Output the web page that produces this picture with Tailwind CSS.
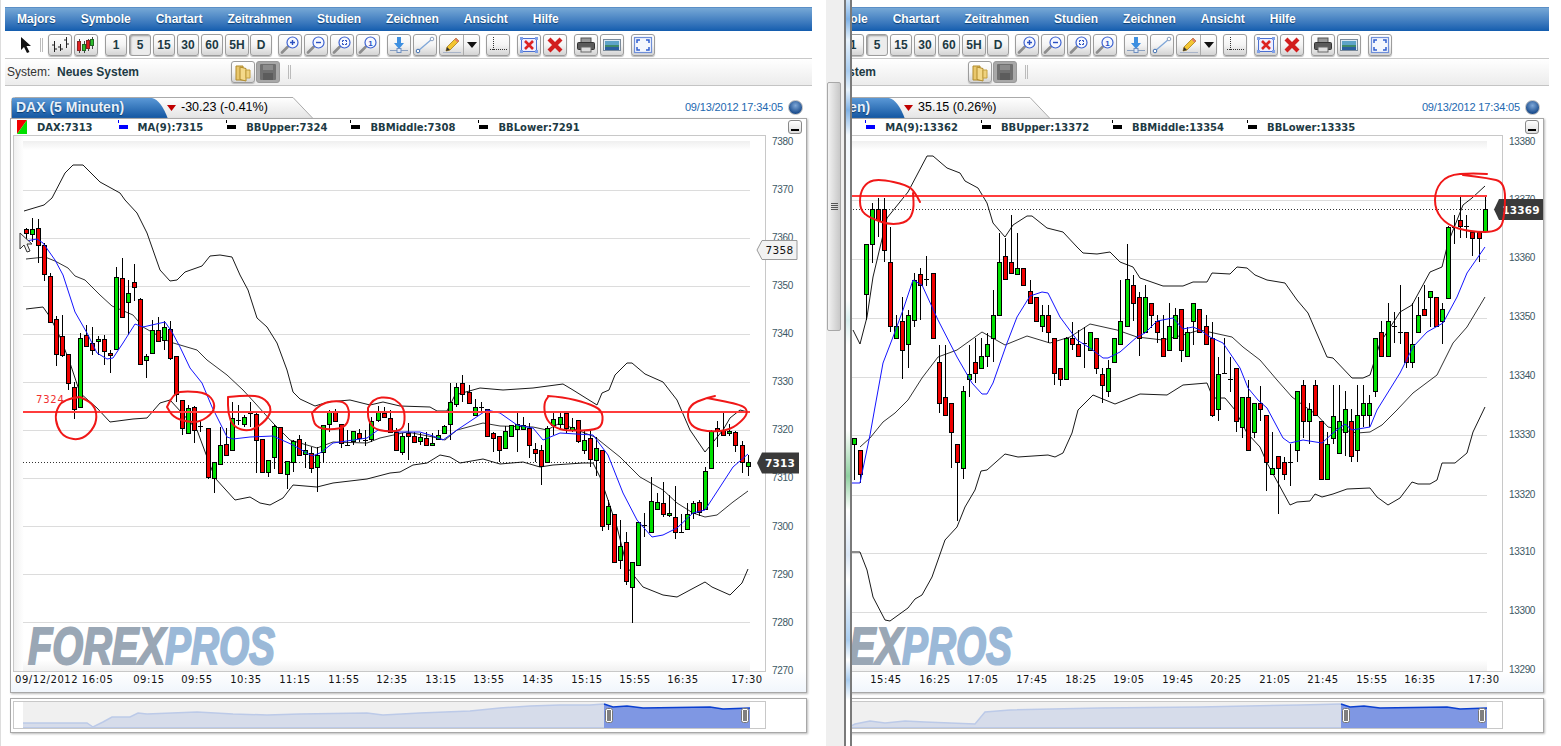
<!DOCTYPE html>
<html lang="en">
<head>
    <meta charset="UTF-8">
    <title>Chart</title>
    <script src="https://cdn.jsdelivr.net/npm/@tailwindcss/browser@4"></script>
</head>
<body class="bg-white h-[746px] w-[1561px] overflow-hidden flex font-['Liberation_Sans',sans-serif] text-[#123]">
    <!-- left chart -->
    <div id="left" class="w-[826px] shrink-0 shadow-[inset_1px_0_0_#ddd]"></div>

    <!-- scrollbar -->
    <div class="w-[18px] shrink-0 bg-[#efefef]">
        <div class="mt-[82px] ml-px h-[249px] w-[14px] rounded-[2px] border border-[#a8a8a8] bg-gradient-to-r from-[#f2f2f2] to-[#c8c8c8] flex flex-col items-center justify-center gap-px">
            <div class="w-[7px] h-px bg-[#555]"></div>
            <div class="w-[7px] h-px bg-[#555]"></div>
            <div class="w-[7px] h-px bg-[#555]"></div>
            <div class="w-[7px] h-px bg-[#555]"></div>
        </div>
    </div>

    <!-- splitter -->
    <div class="w-[8px] shrink-0 border-x-[2px] border-[#7a7a7a] bg-[linear-gradient(to_bottom,#cfe4f8_0,#7fb2e6_19px,#e8f3fc_40px,#a9cdf0_71px,#e8f3fc_90px,#7fb2e6_110px,#f2f8fd_135px,#ffffff_300px,#d9f0f0_320px,#ffffff_345px,#ffffff_430px,#8fd0a0_476px,#ffffff_510px,#d9e6f5_555px,#ffffff_580px,#a9cdf0_640px,#fff_660px,#a9cdf0_680px,#fff_700px)]"></div>

    <!-- right chart, same page scrolled sideways -->
    <div class="flex-1 overflow-hidden">
        <div id="right" class="w-[826px] -ml-[115px]"></div>
    </div>

    <script>
        const F = 'Liberation Sans, Arial, sans-serif';
        const D = 'DejaVu Sans, sans-serif';

        const icons = {
            arrow: '<svg width="13" height="17" viewBox="0 0 13 17"><path d="M1 1v13l3-3 3 6 2.500-1-3-6H11z" fill="#111"/></svg>',
            bars: '<svg width="20" height="17" viewBox="0 0 20 17" fill="none" stroke="#222"><path d="M4.500 5v11M2 9h2.500M4.500 13H7M10.500 8v7M8 11h2.500M10.500 13H13M16.500 1v11M14 4h2.500M16.500 8H19"/></svg>',
            candles: '<svg width="20" height="18" viewBox="0 0 20 18"><path d="M3.500 3v14M8.500 5v12M12.500 3v12M16.500 1v12" stroke="#444"/><rect x="1.500" y="5.500" width="3" height="9" fill="#e02020" stroke="#822"/><rect x="6.500" y="8.500" width="3" height="6" fill="#2fbf2f" stroke="#262"/><rect x="10.500" y="4.500" width="3" height="8" fill="#e02020" stroke="#822"/><rect x="14.500" y="3.500" width="3" height="6" fill="#2fbf2f" stroke="#262"/></svg>',
            zoomIn: mag('<path d="M10 6.500h5M12.500 4v5" stroke="#2a4fc0" stroke-width="1.400"/>'),
            zoomOut: mag('<path d="M10 6.500h5" stroke="#2a4fc0" stroke-width="1.400"/>'),
            zoomFit: mag('<path d="M10.500 6V4.500H12M13 4.500h1.500V6M14.500 7v1.500H13M12 8.500h-1.500V7" stroke="#2a4fc0" fill="none"/>'),
            zoomOne: mag('<text x="12.500" y="9.500" font-size="8" font-weight="bold" fill="#2a4fc0" text-anchor="middle" font-family="Liberation Sans">1</text>'),
            down: '<svg width="20" height="18" viewBox="0 0 20 18"><path d="M8 1h4v6h3l-5 6-5-6h3z" fill="#3d8fe0"/><path d="M1 14.500h18" stroke="#8aa0c0"/><rect x="8" y="12.500" width="4" height="4" fill="#dfe8f5" stroke="#6f8fc0"/></svg>',
            line: '<svg width="20" height="18" viewBox="0 0 20 18"><path d="M3 15L17 3" stroke="#7ea6d8" stroke-width="1.300"/><circle cx="3" cy="15" r="1.800" fill="#fff" stroke="#3f6fb0"/><circle cx="17" cy="3" r="1.800" fill="#fff" stroke="#8aa0c0"/></svg>',
            pencil: '<svg width="20" height="18" viewBox="0 0 20 18"><path d="M5 11L14 2l3 3-9 9-4 1z" fill="#f3c531" stroke="#a8801a" stroke-width=".8"/><path d="M14 2l3 3-1.500 1.500-3-3z" fill="#e07a6a"/><path d="M4 15l1-4 3 3z" fill="#333"/><path d="M1 16.500h18" stroke="#a9b4c8"/></svg>',
            caret: '<svg width="10" height="6" viewBox="0 0 10 6"><path d="M0 0h10L5 6z" fill="#111"/></svg>',
            cross: '<svg width="20" height="18" viewBox="0 0 20 18" fill="none" stroke="#333"><path d="M5.500 1v13" stroke-dasharray="1 1"/><path d="M2 13.500h17" stroke-dasharray="1 1"/></svg>',
            clearBox: '<svg width="20" height="18" viewBox="0 0 20 18"><rect x="2.500" y="2.500" width="15" height="13" fill="#eef" stroke="#4a6fd0"/><path d="M6 5l8 8M14 5l-8 8" stroke="#d22" stroke-width="2.600"/><rect x="1" y="1" width="3" height="3" fill="#7fa0e8"/><rect x="16" y="1" width="3" height="3" fill="#7fa0e8"/><rect x="1" y="14" width="3" height="3" fill="#7fa0e8"/><rect x="16" y="14" width="3" height="3" fill="#7fa0e8"/></svg>',
            del: '<svg width="18" height="16" viewBox="0 0 18 16"><path d="M3 2l12 12M15 2L3 14" stroke="#d21e1e" stroke-width="4.200"/></svg>',
            print: '<svg width="20" height="18" viewBox="0 0 20 18"><rect x="5" y="2" width="10" height="5" fill="#999" stroke="#555"/><rect x="1.500" y="6.500" width="17" height="7" rx="1" fill="#5a5a5a" stroke="#333"/><rect x="5" y="11" width="10" height="5" fill="#ddd" stroke="#666"/></svg>',
            image: '<svg width="20" height="16" viewBox="0 0 20 16"><rect x="1.500" y="2.500" width="17" height="11" fill="#dce8f2" stroke="#7a8a9a"/><rect x="3" y="4" width="14" height="4" fill="#5da3c8"/><rect x="3" y="8" width="14" height="2" fill="#3f8a6a"/><rect x="3" y="10" width="14" height="3" fill="#2a5fa0"/></svg>',
            full: '<svg width="20" height="18" viewBox="0 0 20 18" fill="none" stroke="#2f5fd0" stroke-width="1.200"><rect x="1.500" y="1.500" width="17" height="15" stroke="#6f8fd8" fill="#f4f7fd"/><path d="M4 7V4h3M13 4h3v3M16 11v3h-3M7 14H4v-3" stroke-width="1.500"/></svg>',
            folder: '<svg width="18" height="19" viewBox="0 0 18 19"><path d="M2 3h7v14H2z" fill="#e9c76c" stroke="#b08a2a"/><path d="M6 4l6 1.500V18l-6-1.500z" fill="#f4d98a" stroke="#b08a2a"/><path d="M12 7h4v8h-4z" fill="#efd27e" stroke="#c4a040"/></svg>',
            save: '<svg width="18" height="18" viewBox="0 0 18 18"><rect x="1" y="1" width="16" height="16" rx="1" fill="#707070"/><rect x="4" y="2" width="10" height="5" fill="#8c8c8c"/><rect x="4" y="10" width="10" height="7" fill="#5c5c5c"/></svg>'
        };

        function mag(inner) {
            return '<svg width="20" height="18" viewBox="0 0 20 18"><path d="M2 16.500l5.500-5.500" stroke="#8d8d8d" stroke-width="2.600" stroke-linecap="round"/><circle cx="12.500" cy="6.500" r="5.500" fill="#f6f8ff" stroke="#3d62d0" stroke-width="1.200"/>' + inner + '</svg>';
        }

        function btn(icon, w, extra = '') {
            return `<div class="h-[22px] ${w} ${extra} shrink-0 rounded-[3px] border border-[#9c9c9c] bg-gradient-to-b from-white via-[#f4f4f4] to-[#d4d4d4] shadow-[0_1px_1px_#bbb] flex items-center justify-center">${icon}</div>`;
        }

        function num(label, w, extra = '') {
            return `<div class="h-[22px] ${w} ${extra} shrink-0 rounded-[3px] border border-[#9c9c9c] bg-gradient-to-b from-white via-[#f4f4f4] to-[#d4d4d4] shadow-[0_1px_1px_#bbb] flex items-center justify-center text-[12px] font-bold text-[#1d3a44]">${label}</div>`;
        }

        function mark(color, tick) {
            return `<span class="relative inline-block w-[9px] h-[4px] mr-[10px] ml-[24px]" style="background:${color}"><span class="absolute -top-[5px] -left-px w-px h-[3px]" style="background:${tick}"></span></span>`;
        }

        // candles: [x, wick top, body top, body bottom, wick bottom, kind], read off a 3x crop
        function candles(x0, y0, rows) {
            return rows.map(([x, wt, bt, bb, wb, k]) => {
                const cx = Math.round(x0 + x / 3);
                const wick = `<path d="M${cx + .5} ${Math.round(y0 + wt / 3)}V${Math.round(y0 + wb / 3)}" stroke="#000"/>`;
                if (k === 'd') {
                    const y = Math.round(y0 + bt / 3) + .5;
                    return wick + `<path d="M${cx - 2} ${y}h5" stroke="#000"/>`;
                }
                const top = Math.round(y0 + bt / 3) + .5;
                const h = Math.max(2, Math.round((bb - bt) / 3));
                return wick + `<rect x="${cx - 1.5}" y="${top}" width="4" height="${h}" fill="${k === 'g' ? '#00e000' : '#f00000'}" stroke="#000"/>`;
            }).join('');
        }

        const line = (pts, color, w = 1, op = 1) =>
            `<polyline points="${pts.join(' ')}" fill="none" stroke="${color}" stroke-width="${w}" stroke-opacity="${op}" stroke-linejoin="round"/>`;

        // freehand circle, corners rounded through the midpoints
        function scribble(p) {
            let d = `M${p[0]} ${p[1]}`;
            for (let i = 2; i < p.length - 2; i += 2) {
                d += `Q${p[i]} ${p[i + 1]} ${(p[i] + p[i + 2]) / 2} ${(p[i + 1] + p[i + 3]) / 2}`;
            }
            d += `L${p[p.length - 2]} ${p[p.length - 1]}`;
            return `<path d="${d}" fill="none" stroke="#f01818" stroke-width="2" stroke-linecap="round"/>`;
        }

        const leftCandles = candles(0, 200, [
            [79,85,88,100,125,'r'],[97,55,88,103,125,'g'],[115,58,85,136,190,'r'],[133,128,136,223,242,'r'],[151,218,229,367,370,'r'],
            [169,347,358,463,497,'r'],[187,345,409,466,470,'r'],[205,463,463,550,570,'r'],[223,545,562,628,657,'r'],[241,398,415,622,625,'g'],
            [259,376,406,439,440,'r'],[277,380,430,451,465,'r'],[295,408,418,425,465,'g'],[313,405,418,454,495,'r'],[331,450,460,467,520,'r'],
            [349,200,232,448,450,'g'],[367,175,235,352,355,'r'],[385,240,280,307,405,'g'],[403,193,247,262,303,'r'],[421,295,298,493,496,'r'],
            [439,462,469,482,533,'g'],[457,360,391,460,462,'g'],[475,352,391,424,425,'r'],[493,362,382,420,450,'g'],[511,362,388,475,480,'r'],
            [529,468,469,583,605,'r'],[547,600,601,685,705,'r'],[565,615,625,700,702,'g'],[583,618,622,691,728,'r'],[601,660,678,678,695,'d'],
            [625,685,685,832,836,'r'],[643,787,787,835,880,'g'],[661,680,736,793,793,'g'],[679,685,733,766,768,'r'],[697,605,655,751,752,'g'],
            [715,615,660,660,675,'d'],[733,645,650,670,680,'g'],[751,605,640,640,680,'d'],[769,640,643,721,820,'r'],[787,717,717,817,820,'r'],
            [805,781,781,817,830,'g'],[823,675,679,772,808,'g'],[841,680,682,820,822,'r'],[862,784,784,823,868,'g'],[880,720,724,787,815,'g'],
            [898,705,718,766,767,'r'],[916,725,751,763,805,'g'],[934,740,760,805,820,'r'],[952,740,766,802,877,'g'],[970,675,676,757,790,'g'],
            [988,630,636,673,695,'g'],[1006,628,634,664,665,'r'],[1024,672,673,730,745,'r'],[1042,690,735,735,737,'d'],[1060,692,694,724,735,'g'],
            [1078,688,700,715,725,'r'],[1096,690,720,720,737,'d'],[1114,652,664,718,725,'g'],[1135,618,637,661,665,'g'],[1153,622,640,652,655,'r'],
            [1171,630,655,697,700,'r'],[1189,685,695,748,750,'r']
        ]) + candles(400, 350, [
            [7,250,257,305,315,'g'],[25,220,250,258,330,'r'],[43,245,259,277,280,'r'],[61,250,260,271,285,'g'],[79,245,265,287,288,'r'],
            [97,250,280,287,288,'g'],[115,240,256,268,270,'g'],[133,225,229,250,250,'g'],[151,100,157,223,270,'g'],[169,100,112,163,170,'g'],
            [187,75,100,133,155,'r'],[208,105,127,160,160,'r'],[226,148,172,196,198,'g'],[244,155,170,170,190,'d'],[262,178,178,259,262,'r'],
            [280,245,250,265,305,'r'],[298,258,259,301,337,'r'],[316,228,244,295,297,'g'],[334,225,226,259,260,'g'],[352,188,221,235,305,'g'],
            [370,200,226,237,240,'g'],[388,218,235,287,323,'r'],[406,280,298,310,335,'r'],[424,285,301,349,405,'r'],[442,228,235,337,340,'g'],
            [460,188,208,226,255,'g'],[481,190,202,223,240,'g'],[499,188,190,235,250,'r'],[517,205,232,241,245,'g'],[535,210,211,274,280,'r'],
            [553,240,271,301,312,'g'],[571,240,265,328,352,'r'],[589,260,295,331,378,'g'],[607,300,301,529,543,'r'],[625,450,469,523,540,'g'],
            [643,493,493,637,640,'r'],[661,510,589,631,658,'g'],[679,545,577,694,705,'r'],[697,635,637,712,820,'g'],[715,516,517,646,648,'g'],
            [733,490,525,525,560,'d'],[754,380,454,547,549,'g'],[772,430,457,478,480,'g'],[790,395,460,493,500,'r'],[808,435,490,497,500,'g'],
            [826,407,502,547,566,'r'],[844,492,545,545,548,'d'],[862,460,493,538,540,'g'],[880,452,460,490,507,'g'],[898,450,457,487,497,'r'],
            [916,352,364,478,480,'g'],[934,240,244,355,356,'g'],[952,212,235,244,290,'r'],[970,190,241,256,258,'r'],[988,222,244,250,258,'g'],
            [1006,244,247,286,305,'r'],[1027,272,286,337,370,'r'],[1045,315,337,349,377,'g']
        ]);

        const rightCandles = candles(850, 130, [
            [13,925,925,943,1050,'g'],[31,960,961,1033,1060,'r'],[49,343,343,493,570,'g'],[67,220,238,343,400,'g'],[85,203,238,271,320,'r'],
            [103,203,238,361,395,'r'],[121,290,397,589,607,'r'],[139,555,589,625,625,'g'],[157,502,574,661,748,'r'],[175,540,556,643,713,'g'],
            [193,430,450,571,590,'g'],[211,415,433,466,570,'r'],[229,378,448,448,468,'d'],[250,430,430,625,627,'r'],[268,645,697,820,850,'r'],
            [286,645,802,856,856,'r'],[304,820,820,907,1013,'r'],[322,943,943,997,1172,'r'],[340,768,784,1015,1048,'g'],[358,645,733,748,800,'g'],
            [376,625,697,731,760,'r'],[394,625,679,715,717,'g'],[412,610,643,679,710,'g'],[430,480,556,625,695,'g'],[448,310,397,556,557,'g'],
            [466,325,379,448,450,'r'],[484,255,397,430,432,'r'],[502,308,415,433,435,'g'],[520,415,415,466,468,'r'],[541,450,484,520,522,'r'],
            [559,502,502,574,576,'r'],[577,525,556,589,607,'g'],[595,525,556,607,640,'r'],[613,625,625,730,765,'r'],[631,715,715,748,768,'r'],
            [649,622,625,748,750,'g'],[667,575,625,643,660,'r'],[685,600,643,679,681,'r'],[703,590,640,640,713,'d'],[721,607,607,661,663,'g'],
            [739,625,625,715,732,'r'],[757,715,733,766,820,'r'],[775,690,715,784,800,'g'],[793,625,625,697,698,'g'],[811,450,574,643,645,'g'],
            [832,343,448,589,590,'g'],[850,435,466,520,572,'r'],[868,485,502,625,678,'r'],[886,465,502,607,608,'g'],[904,520,520,556,595,'r'],
            [922,555,574,607,640,'r'],[940,555,625,679,680,'r'],[958,520,589,661,662,'g'],[976,535,556,625,626,'g'],[994,538,538,661,695,'r'],
            [1012,590,607,679,680,'g'],[1030,520,520,574,645,'g'],[1048,538,538,607,610,'r']
        ]) + candles(1200, 130, [
            [19,555,589,643,645,'r'],[37,575,625,856,860,'r'],[55,680,733,838,872,'g'],[73,625,730,730,733,'d'],[91,680,748,748,785,'d'],
            [109,715,715,874,907,'r'],[127,802,802,892,925,'g'],[145,750,802,961,961,'r'],[163,820,820,907,925,'g'],[181,767,820,838,872,'r'],
            [199,856,856,997,1084,'r'],[217,907,1015,1033,1033,'g'],[235,979,979,1015,1153,'r'],[253,980,997,1033,1050,'r'],[271,943,997,997,1067,'d'],
            [292,784,784,961,995,'g'],[310,750,766,874,925,'r'],[328,820,838,874,943,'g'],[346,750,766,856,856,'r'],[364,874,874,1048,1048,'r'],
            [382,907,943,1048,1050,'g'],[400,766,859,925,943,'g'],[418,766,874,970,970,'g'],[436,784,838,907,978,'g'],[454,838,874,979,995,'r'],
            [472,766,856,961,995,'g'],[490,766,820,856,890,'g'],[508,795,820,856,890,'g'],[526,625,625,785,800,'g'],[544,573,607,679,681,'r'],
            [565,520,574,679,681,'g'],[583,545,588,588,640,'d'],[601,466,607,607,642,'d'],[619,607,607,697,713,'r'],[637,520,643,697,713,'g'],
            [655,502,556,607,609,'g'],[673,466,538,556,558,'r'],[691,484,484,502,590,'g'],[709,502,502,589,590,'r'],[727,520,538,574,642,'g'],
            [745,289,290,502,503,'g'],[763,255,290,290,343,'d'],[781,202,271,289,325,'r'],[799,255,289,289,325,'d'],[817,305,307,325,378,'r'],
            [838,305,307,325,396,'r'],[856,202,238,305,306,'g']
        ]);

        const left = {
            off: 0,
            title: 'DAX (5 Minuten)', titleCls: 'pl-[5px]',
            change: '-30.23 (-0.41%)',
            legend: ['DAX:7313', 'MA(9):7315', 'BBUpper:7324', 'BBMiddle:7308', 'BBLower:7291'],
            grid: [190,238,286,334,382,430,478,526,574,622],
            labels: [[7380,141],[7370,189],[7360,237],[7350,285],[7340,333],[7330,381],[7320,429],[7310,477],[7300,526],[7290,574],[7280,622],[7270,670]],
            times: [[149,'09:15'],[197,'09:55'],[246,'10:35'],[295,'11:15'],[344,'11:55'],[392,'12:35'],[441,'13:15'],[489,'13:55'],[538,'14:35'],[587,'15:15'],[635,'15:55'],[683,'16:35'],[747,'17:30']],
            redY: 412, dotY: 462.500,
            upper: [24,211,44,205,52,198,65,173,73,165,83,165,100,182,120,193,125,200,137,213,147,233,160,270,170,281,177,280,185,272,202,266,210,256,220,255,232,257,240,275,248,290,257,318,267,327,277,343,287,370,293,392,300,399,315,406,328,402,350,400,370,405,383,402,400,406,430,407,437,411,447,411,455,395,480,388,503,390,533,388,563,384,573,390,597,405,602,393,609,390,615,375,627,363,632,363,645,374,663,382,677,400,690,430,705,452,723,430,730,418,740,410,748,412],
            middle: [26,259,45,257,55,261,68,268,75,276,85,280,100,295,112,306,133,315,143,327,157,335,170,342,197,350,207,360,227,375,243,390,255,403,273,423,290,440,317,448,333,442,367,443,380,438,407,432,433,437,445,440,457,430,483,423,500,426,533,427,547,430,560,423,577,430,595,437,620,457,640,477,663,490,677,503,693,513,705,517,717,515,733,502,748,491],
            lower: [26,309,43,307,50,317,60,337,70,363,80,393,97,408,110,422,133,419,147,418,160,403,170,400,182,413,197,430,207,457,215,478,235,500,250,497,260,503,270,505,283,498,293,485,317,487,333,483,367,479,390,473,400,472,413,465,427,463,440,455,450,457,460,463,483,459,500,464,523,462,540,467,553,465,583,463,593,463,600,477,608,500,617,527,627,567,643,587,663,595,677,597,690,590,705,582,712,587,730,595,742,583,748,569],
            ma: [26,241,37,239,43,243,55,260,63,275,75,312,87,333,97,353,107,359,113,358,123,343,135,324,143,327,165,322,172,332,180,347,190,368,202,383,212,407,227,437,233,439,250,437,273,436,293,445,312,456,320,453,333,443,367,438,378,430,400,432,420,432,433,436,443,440,457,430,487,410,500,413,517,425,533,428,543,440,560,433,593,435,608,455,623,493,637,520,652,537,663,535,677,528,693,513,705,510,720,487,733,467,748,454],
            candles: leftCandles,
            circles: [
                [80,397,63,399,55,413,57,427,65,438,82,440,95,427,97,413,92,403,80,397],
                [167,407,173,393,187,391,207,393,215,403,213,413,200,422,187,422,173,417,167,407],
                [228,397,247,395,263,397,272,408,267,420,250,432,233,427,228,413,228,397],
                [312,413,320,403,343,400,350,410,347,427,330,430,315,427,312,413],
                [368,408,373,398,390,397,400,403,405,412,404,428,395,432,375,430,368,420,368,408],
                [548,396,563,397,587,403,602,410,603,423,597,430,567,431,553,427,545,417,544,403,548,397],
                [715,396,705,398,690,405,687,417,693,428,710,432,730,430,743,420,748,412,743,405,707,398]
            ],
            tags: `<path d="M757 250l5-9.500h35v19h-35z" fill="#f2f2f2" stroke="#9a9a9a"/>
                <text x="779.500" y="254" font-family="${D}" font-size="10.500" fill="#111" text-anchor="middle" letter-spacing=".3">7358</text>
                <path d="M757 463l5-10.500h37v21h-37z" fill="#3a3a3a"/>
                <text x="780" y="467" font-family="${D}" font-size="10.500" font-weight="bold" fill="#fff" text-anchor="middle" letter-spacing=".2">7313</text>`,
            extra: `<text x="36" y="403" font-family="${D}" font-size="10" fill="#f03030" letter-spacing=".8">7324</text>
                <path d="M20 233v16l4-4 3 7 3-1-3-7h5z" fill="#f2f2f2" stroke="#333"/>`,
            navLine: '23,723 87,723 93,727 103,722 112,717 130,717 138,713 147,714 197,712 233,714 267,715 300,714 367,713 383,715 420,713 470,711 500,708 530,706 560,705 590,705 604,704',
            navStart: 23
        };

        const right = {
            off: 737,
            title: 'Dow (5 Minuten)', titleCls: 'pl-[14px]',
            change: '35.15 (0.26%)',
            legend: ['DOW:13369', 'MA(9):13362', 'BBUpper:13372', 'BBMiddle:13354', 'BBLower:13335'],
            grid: [200.500,259,318,377,435,495,553,612],
            labels: [[13380,141],[13370,199],[13360,257],[13350,316],[13340,375],[13330,434],[13320,494],[13310,551],[13300,610],[13290,669]],
            times: [[149,'15:45'],[198,'16:25'],[246,'17:05'],[295,'17:45'],[344,'18:25'],[392,'19:05'],[441,'19:45'],[489,'20:25'],[538,'21:05'],[586,'21:45'],[635,'15:55'],[683,'16:35'],[747,'17:30']],
            redY: 196, dotY: 209.500,
            upper: [853,330,860,344,867,317,873,277,887,218,908,192,927,156,933,156,947,168,960,173,965,181,978,188,987,203,993,223,1005,237,1013,225,1027,216,1032,216,1047,228,1063,232,1077,247,1083,253,1097,254,1110,252,1120,262,1133,267,1140,278,1163,286,1183,286,1193,282,1207,282,1212,273,1230,274,1237,267,1247,268,1255,275,1267,280,1285,283,1297,300,1308,313,1327,357,1333,358,1352,378,1363,378,1370,375,1380,343,1400,312,1412,305,1430,272,1442,267,1448,243,1463,205,1472,198,1485,186],
            middle: [860,447,870,438,883,422,895,413,908,400,922,378,938,357,957,350,982,332,1005,345,1027,336,1050,343,1070,337,1090,324,1117,330,1137,337,1163,340,1183,335,1200,330,1232,337,1243,347,1260,360,1277,380,1292,397,1307,408,1317,415,1328,427,1343,430,1357,433,1370,432,1382,425,1397,410,1413,393,1437,375,1453,343,1467,327,1485,297],
            lower: [852,552,860,552,867,570,873,597,885,620,890,621,908,608,915,599,922,595,932,577,945,540,957,527,965,507,975,490,981,471,987,470,1005,454,1018,457,1048,455,1055,457,1063,453,1072,433,1078,410,1093,395,1115,404,1140,394,1167,395,1183,385,1207,383,1213,398,1225,398,1235,410,1247,433,1260,447,1267,463,1278,483,1290,505,1297,502,1310,501,1315,494,1322,497,1333,494,1347,489,1370,488,1377,497,1388,505,1400,498,1412,482,1418,484,1430,484,1437,480,1442,463,1455,463,1467,453,1473,432,1485,407],
            ma: [852,483,860,483,870,435,875,407,883,363,893,337,903,310,913,280,922,285,938,320,957,357,972,383,982,394,987,394,993,383,1007,343,1017,317,1030,296,1042,292,1048,293,1060,317,1077,340,1090,348,1103,358,1108,358,1120,352,1137,337,1145,333,1157,321,1173,318,1183,329,1193,327,1200,330,1210,337,1223,343,1240,368,1248,388,1258,400,1267,408,1283,438,1290,443,1303,440,1322,443,1333,433,1345,424,1352,430,1370,427,1377,410,1400,373,1413,347,1427,332,1443,323,1457,297,1467,273,1485,247],
            candles: rightCandles,
            circles: [
                [920,202,915,192,907,185,880,179,867,182,860,193,860,210,870,218,890,225,908,222,914,210,913,193],
                [1487,174,1473,173,1447,175,1435,190,1435,210,1447,225,1470,232,1500,232,1505,213,1505,182,1487,178,1463,175]
            ],
            tags: `<path d="M1494 209.500l5-10.500h44v21h-44z" fill="#3a3a3a"/>
                <text x="1521" y="214" font-family="${D}" font-size="10.500" font-weight="bold" fill="#fff" text-anchor="middle" letter-spacing=".2">13369</text>`,
            extra: '',
            navLine: '760,727 851,726 855,724 870,721 885,723 905,721 925,722 975,724 985,712 1010,710 1100,708 1200,707 1300,705 1341,704',
            navStart: 760
        };

        function chart(c) {
            const o = c.off;
            const yLabels = c.labels.map(([v, y]) =>
                `<text x="772" y="${y + 4}" font-family="${F}" font-size="10" letter-spacing="-.35" fill="#3c5864">${v}</text>`).join('');
            const times = c.times.map(([x, t]) =>
                `<text x="${x}" y="683" font-family="${D}" font-size="10" letter-spacing=".55" fill="#111" text-anchor="middle">${t}</text>`).join('');
            const grid = c.grid.map(y => `<path d="M${23 + o} ${Math.floor(y) + .5}H${750 + o}" stroke="#dcdcdc"/>`).join('');
            return `<svg class="block" width="795" height="557" viewBox="${11 + o} 135 795 557">
                <defs>
                    <linearGradient id="fadeL"><stop offset="0" stop-color="#f0f0f0"/><stop offset="1" stop-color="#fff"/></linearGradient>
                    <linearGradient id="fadeT" x2="0" y2="1"><stop offset="0" stop-color="#efefef"/><stop offset="1" stop-color="#fff"/></linearGradient>
                    <linearGradient id="fadeB" x2="0" y2="1"><stop offset="0" stop-color="#fff"/><stop offset="1" stop-color="#f1f1f1"/></linearGradient>
                    <linearGradient id="axis" x2="0" y2="1"><stop offset="0" stop-color="#fff"/><stop offset="1" stop-color="#f1f6fc"/></linearGradient>
                </defs>
                <g transform="translate(${o} 0)">
                    <rect x="11" y="671" width="795" height="21" fill="url(#axis)"/>
                    <rect x="13.500" y="135.500" width="752" height="536" fill="#fff" stroke="#c8c8c8"/>
                    <rect x="14" y="136" width="10" height="535" fill="url(#fadeL)"/>
                    <rect x="23" y="141" width="727" height="9" fill="url(#fadeT)"/>
                    <rect x="23" y="660" width="727" height="11" fill="url(#fadeB)"/>
                    <text x="28" y="664" font-family="${F}" font-size="52" font-weight="bold" font-style="italic" fill="#9aa7b5" stroke="#9aa7b5" stroke-width="2" textLength="137" lengthAdjust="spacingAndGlyphs">FOREX</text>
                    <text x="165" y="664" font-family="${F}" font-size="52" font-weight="bold" font-style="italic" fill="#9bb9d8" stroke="#9bb9d8" stroke-width="2" textLength="110" lengthAdjust="spacingAndGlyphs">PROS</text>
                </g>
                ${grid}
                <path d="M${23 + o} ${c.dotY}H${750 + o}" stroke="#333" stroke-dasharray="1 2"/>
                <g transform="translate(${o} 0)">
                    <text x="15" y="683" font-family="${D}" font-size="10" letter-spacing=".55" fill="#111">${o ? '' : '09/12/2012 16:05'}</text>
                    ${times}${yLabels}
                </g>
                ${line(c.lower, '#000', 1, .9)}${line(c.upper, '#000', 1, .9)}${line(c.middle, '#000', 1, .8)}
                ${c.candles}
                ${line(c.ma, '#1414ff')}
                ${c.tags}
                <path d="M${23 + o} ${c.redY}H${750 + o}" stroke="#ff3c3c" stroke-width="2"/>
                ${c.extra}
                ${c.circles.map(scribble).join('')}
            </svg>`;
        }

        function navigator(c) {
            const o = c.off;
            const sel = `${604 + o},704 ${613 + o},707 ${627 + o},706 ${643 + o},708 ${710 + o},707 ${723 + o},709 ${750 + o},708`;
            const grip = x => `<rect x="${x + .5}" y="708.500" width="7" height="14" rx="2" fill="#fff" stroke="#777"/><path d="M${x + 3} 710v11M${x + 5} 710v11" stroke="#000"/>`;
            return `<svg class="block" width="795" height="33" viewBox="${11 + o} 699 795 33">
                <rect x="${13.500 + o}" y="701.500" width="752" height="27" fill="#fff" stroke="#c8c8c8"/>
                <rect x="${23 + o}" y="702" width="727" height="26" fill="#f0f0f0"/>
                <polygon points="${c.navLine} ${604 + o},727.500 ${c.navStart},727.500" fill="#d6dcea"/>
                <polyline points="${c.navLine}" fill="none" stroke="#bccae8" stroke-width="1.500"/>
                <path d="M${c.navStart} 727.500H${604 + o}" stroke="#bccae8"/>
                <polygon points="${sel} ${750 + o},728 ${604 + o},728" fill="#7f97e3"/>
                <polyline points="${sel}" fill="none" stroke="#0a3fd0" stroke-width="1.600"/>
                ${grip(605 + o)}${grip(741 + o)}
            </svg>`;
        }

        function pane(c) {
            const items = c.legend.slice(1);
            const colors = [['#0000ff', '#0000ff'], ['#000', '#000'], ['#000', '#000'], ['#000', '#000']];
            return `
            <div class="w-[812px] pt-[7px] pl-[5px]">
                <!-- menu -->
                <div class="h-[24px] flex items-center gap-[25px] pl-[12px] pb-px border-t border-[#5b8fc6] bg-gradient-to-b from-[#76a8d6] to-[#125dae] text-[12px] font-bold text-white [text-shadow:0_1px_1px_#0b3c70]">
                    <span>Majors</span><span>Symbole</span><span>Chartart</span><span>Zeitrahmen</span><span>Studien</span><span>Zeichnen</span><span>Ansicht</span><span>Hilfe</span>
                </div>
                <!-- toolbar -->
                <div class="h-[28px] flex items-center pl-[15px] border-b border-[#c9c9c9] bg-white">
                    <div class="w-[20px] shrink-0">${icons.arrow}</div>
                    <div class="w-[3px] h-[14px] border-x border-[#bbb] shrink-0 mr-[5px]"></div>
                    ${btn(icons.bars, 'w-[24px]', 'mr-[2px]')}${btn(icons.candles, 'w-[24px]', 'mr-[7px]')}
                    ${num('1', 'w-[22px]', 'mr-[2px]')}
                    ${num('5', 'w-[22px]', 'mr-[2px] bg-none bg-[#ececec] shadow-[inset_1px_1px_2px_#999]')}
                    ${num('15', 'w-[22px]', 'mr-[2px]')}${num('30', 'w-[22px]', 'mr-[2px]')}${num('60', 'w-[22px]', 'mr-[2px]')}
                    ${num('5H', 'w-[24px]', 'mr-[1px]')}${num('D', 'w-[22px]', 'mr-[6px]')}
                    ${btn(icons.zoomIn, 'w-[24px]', 'mr-[2px]')}${btn(icons.zoomOut, 'w-[24px]', 'mr-[2px]')}${btn(icons.zoomFit, 'w-[24px]', 'mr-[2px]')}${btn(icons.zoomOne, 'w-[24px]', 'mr-[7px]')}
                    ${btn(icons.down, 'w-[24px]', 'mr-[2px]')}${btn(icons.line, 'w-[24px]', 'mr-[2px]')}
                    <div class="h-[22px] w-[41px] mr-[6px] shrink-0 rounded-[3px] border border-[#9c9c9c] bg-gradient-to-b from-white via-[#f4f4f4] to-[#d4d4d4] shadow-[0_1px_1px_#bbb] flex items-center">
                        <div class="w-[24px] flex justify-center border-r border-[#aaa] h-full items-center">${icons.pencil}</div>
                        <div class="flex-1 flex justify-center">${icons.caret}</div>
                    </div>
                    ${btn(icons.cross, 'w-[24px]', 'mr-[7px]')}
                    ${btn(icons.clearBox, 'w-[24px]', 'mr-[2px]')}${btn(icons.del, 'w-[24px]', 'mr-[7px]')}
                    ${btn(icons.print, 'w-[24px]', 'mr-[2px]')}${btn(icons.image, 'w-[24px]', 'mr-[7px]')}
                    ${btn(icons.full, 'w-[24px]')}
                </div>
                <!-- system row -->
                <div class="h-[27px] flex items-center pl-[2px] border-b border-[#c4c4c4] bg-gradient-to-b from-white to-[#ececec] text-[12px]">
                    <span class="w-[50px] shrink-0 text-[#333]">System:</span>
                    <span class="w-[174px] shrink-0 font-bold text-[#1d3a44]">Neues System</span>
                    ${btn(icons.folder, 'w-[24px]', 'mr-[1px]')}
                    <div class="h-[22px] w-[24px] rounded-[3px] border border-[#999] bg-[#a8a8a8] flex items-center justify-center">${icons.save}</div>
                    <div class="w-[3px] h-[14px] border-x border-[#bbb] ml-[8px]"></div>
                </div>
                <!-- tab row -->
                <div class="relative mt-[11px] ml-[6px] h-[21px] flex items-center justify-between">
                    <svg class="absolute left-0 top-0" width="305" height="22" viewBox="0 0 305 22">
                        <defs>
                            <linearGradient id="tabGrey" x2="0" y2="1"><stop offset="0" stop-color="#fff"/><stop offset="1" stop-color="#e4e4e4"/></linearGradient>
                            <linearGradient id="tabBlue" x2="0" y2="1"><stop offset="0" stop-color="#5a98d6"/><stop offset="1" stop-color="#0f539f"/></linearGradient>
                        </defs>
                        <path d="M.5 21.500V3.500Q.5.500 3.500.500H282L302 21.500z" fill="url(#tabGrey)" stroke="#aaa"/>
                        <path d="M1 22V1H141Q150 3 157 22z" fill="url(#tabBlue)"/>
                    </svg>
                    <div class="relative flex items-center whitespace-nowrap">
                        <span class="${c.titleCls} w-[156px] text-[14px] font-bold text-[#e8f1fa] [text-shadow:0_1px_1px_#0b3c70]">${c.title}</span>
                        <svg width="9" height="6" viewBox="0 0 9 6" class="mr-[5px]"><path d="M0 0h9L4.500 6z" fill="#c00000"/></svg>
                        <span class="text-[12.500px] text-black">${c.change}</span>
                    </div>
                    <div class="relative flex items-center gap-[5px] mr-[9px] text-[11px] tracking-[-.15px] text-[#2268b0]">
                        <span>09/13/2012 17:34:05</span>
                        <span class="w-[15px] h-[15px] rounded-full border border-[#bbb] bg-[radial-gradient(circle_at_50%_35%,#7fa8d8,#1d4f8f_70%)]"></span>
                    </div>
                </div>
                <!-- chart panel -->
                <div class="relative ml-[5px] w-[797px] border border-[#a8a8a8] shadow-[1px_1px_2px_#bbb] bg-white">
                    <div class="h-[16px] flex items-center pl-[6px] text-[10px] font-bold font-['DejaVu_Sans',sans-serif] text-[#1d3a44] whitespace-nowrap">
                        <svg width="10" height="14" viewBox="0 0 10 14" class="mr-[10px]"><path d="M0 0h10L0 14z" fill="#f00000"/><path d="M10 0v14H0z" fill="#00e000"/></svg>
                        <span class="mr-[2px]">${c.legend[0]}</span>
                        ${items.map((t, i) => mark(colors[i][0], colors[i][1]) + `<span>${t}</span>`).join('')}
                        <span class="ml-auto mr-[4px] w-[14px] h-[14px] rounded-[3px] border border-[#888] bg-gradient-to-b from-white to-[#ddd] flex items-end justify-center pb-[2px]"><span class="w-[8px] h-[2px] bg-black"></span></span>
                    </div>
                    ${chart(c)}
                </div>
                <!-- navigator -->
                <div class="ml-[5px] mt-[5px] w-[797px] border border-[#a8a8a8] shadow-[1px_1px_2px_#bbb] bg-white">${navigator(c)}</div>
            </div>`;
        }

        document.getElementById('left').innerHTML = pane(left);
        document.getElementById('right').innerHTML = pane(right);
    </script>
</body>
</html>
